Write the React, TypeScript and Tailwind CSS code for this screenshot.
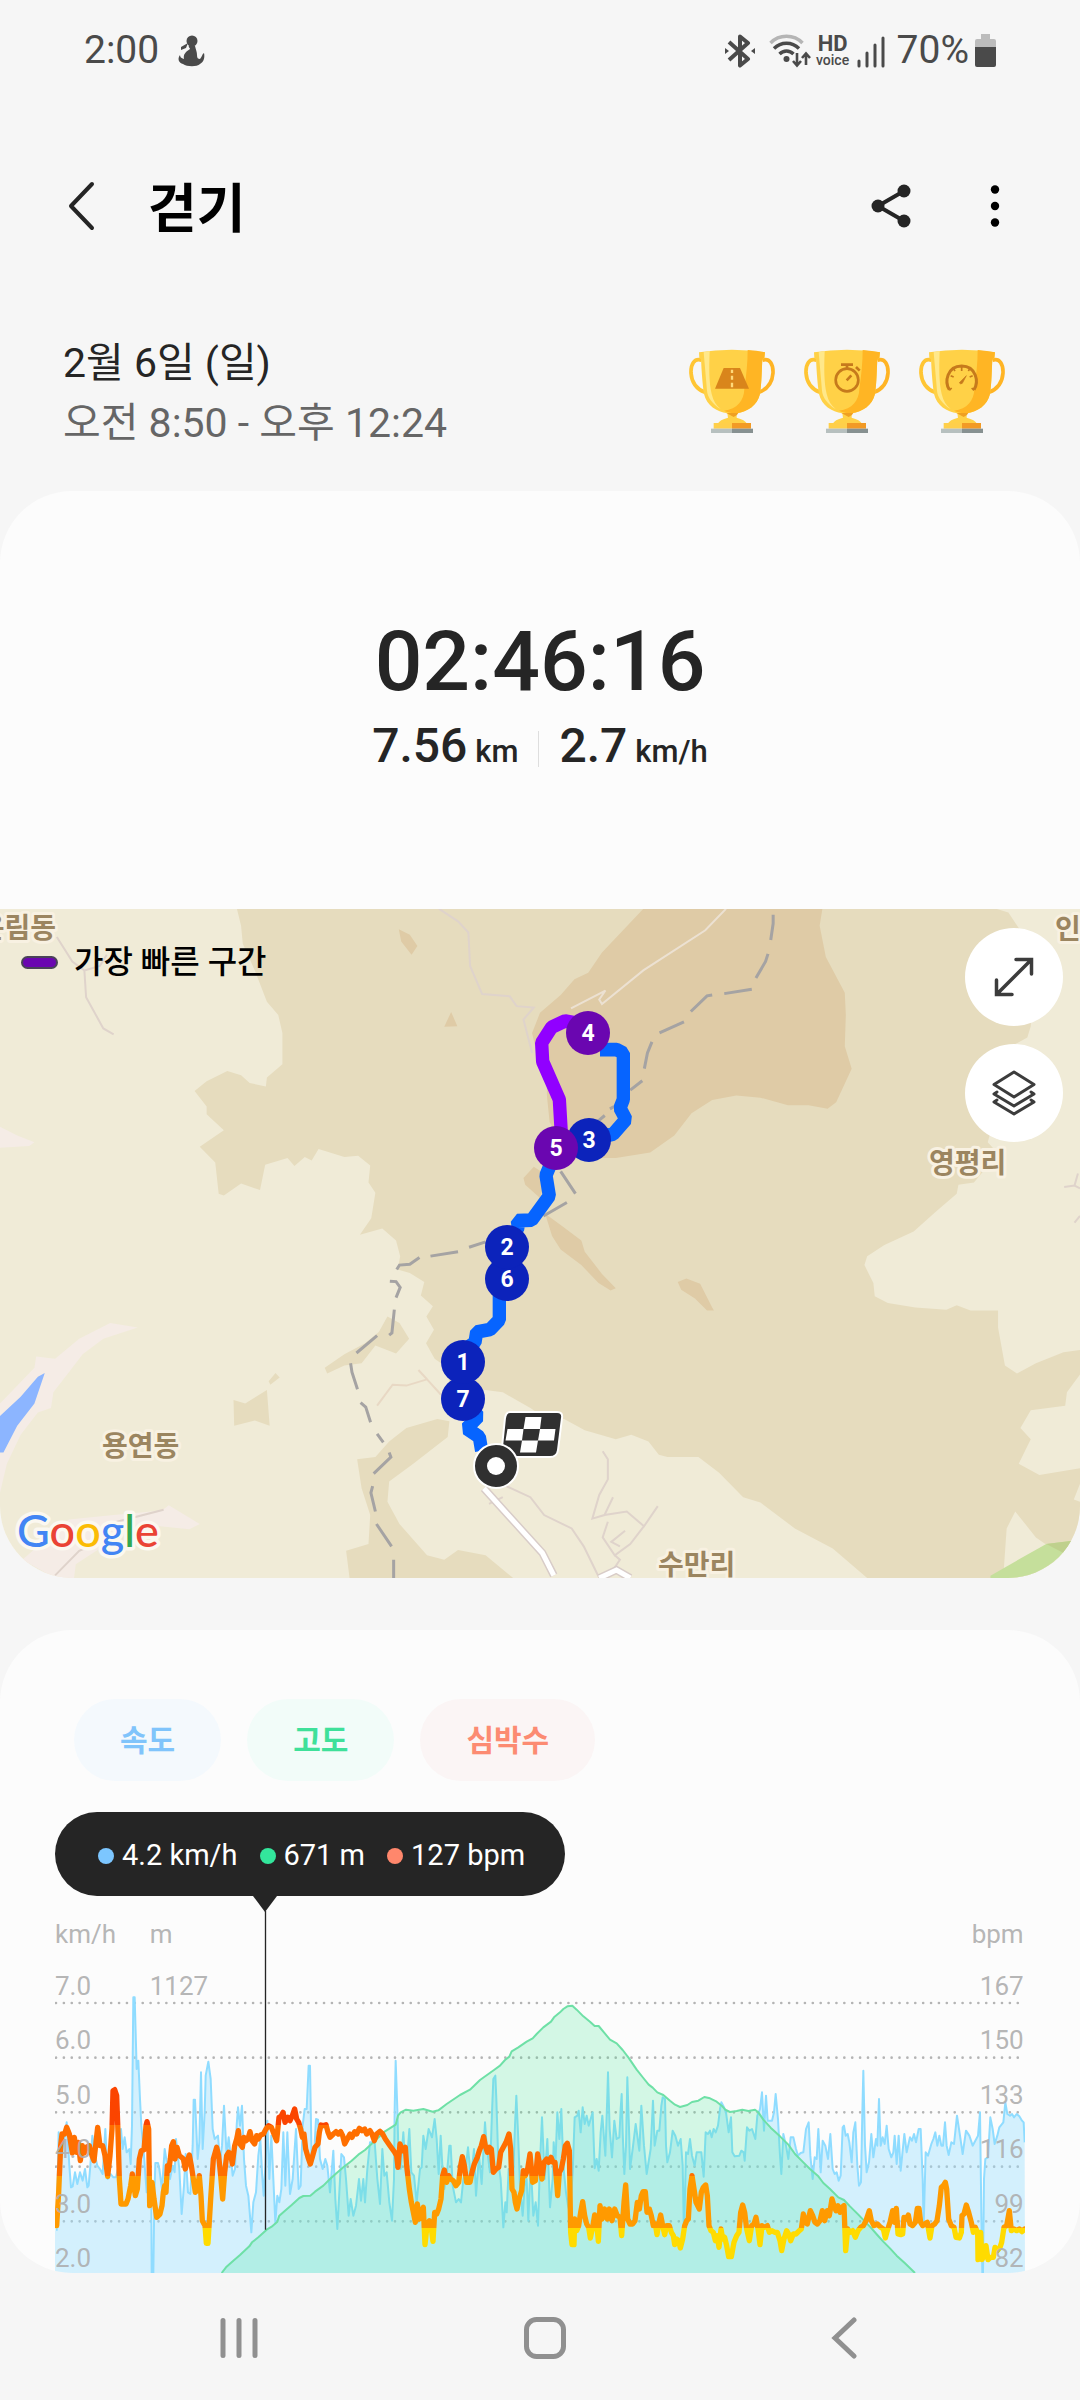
import React from 'react';

type Point = [number, number];

const toPoints = (dx: number, raw: string): Point[] =>
  raw
    .trim()
    .split(/\s+/)
    .map((pair) => {
      const [x, y] = pair.split(',').map(Number);
      return [x + dx, y];
    });

const toPath = (points: Point[]) =>
  'M' + points.map(([x, y]) => `${x} ${y}`).join('L');

// Chart space is 2910 units wide, each series comes in three chunks
const speed: Point[] = [
  ...toPoints(
    -45,
    `50,1055 56,760 62,850 80,730 88,860 93,925 98,922 105,880 112,915 120,880 128,905 135,870 142,925 146,920 151,860 157,770 165,830 172,860 180,870 188,885 196,750
    203,900 212,885 220,895 228,895 236,860 243,750 248,810 254,775 260,820 268,810 272,855 276,740 280,355 284,355 290,570 295,545 300,660 304,740 312,830
    320,940 328,820 334,960 335,1182 340,1182 343,960 346,852 354,852 358,870 366,930 374,810 382,860 390,900 398,860 404,880 408,780 418,870 425,1005 432,920 437,825
    444,940 451,945 458,800 461,662 465,662 473,840 478,790 483,580 488,810 494,700 497,590 505,548 512,600 518,750 524,780 534,770 540,850 546,800 552,680 560,830
    566,775 572,830 578,890 585,870 590,740 594,685 600,740 606,680 612,840 618,920 625,950 634,1060 640,970 648,940 655,830 661,780 666,880 671,950 677,850
    682,725 688,900 694,770 700,900 706,1030 712,950 718,970 724,930 730,760 736,920 742,760 750,945 758,900 768,750 776,930 782,920 788,740 794,690 800,690
    806,560 810,560 815,850 822,830 828,720 834,722 840,840 848,870 856,840 862,860 870,940 880,815 886,960 892,1050 898,940 904,825 912,835 918,900 926,1010
    932,960 940,1010 948,980 957,900 963,965 970,900 975,970 982,870 990,790`,
  ),
  ...toPoints(
    945,
    `8,790 14,790 22,900 30,975 37,810 43,890 50,880 58,970 66,1025 72,900 74,690 77,545 82,690 86,850 92,870 100,760 108,890 118,750 124,880 132,890 140,970
    150,870 155,865 160,770 167,810 176,750 186,775 194,720 200,780 206,885 212,770 217,860 223,930 232,870 238,800 242,800 248,920 258,970 266,960 273,970 280,900 287,870
    294,805 303,900 312,810 318,950 327,830 335,915 345,730 350,800 360,880 366,700 370,600 376,590 379,660 385,850 392,900 400,1045 406,970 410,1000 416,870
    424,920 430,880 435,740 439,650 444,760 450,920 458,1010 464,920 470,900 475,1025 482,850 490,1010 497,970 504,1040 510,850 516,715 524,900 532,780 540,985
    548,900 551,790 556,860 562,700 568,780 574,690 580,860 588,940 594,980 600,1000 608,880 614,715 622,710 626,695 632,760 638,685 644,735 650,710 656,740
    668,700 674,868 680,840 686,875 692,760 697,710 706,830 712,650 714,580 719,750 726,835 733,725 740,780 748,775 752,690 755,645 758,760 763,885 768,800
    772,595 778,780 780,870 788,810 797,735 808,815 814,680 822,800 830,885 842,810 849,665 854,800 862,755 868,755 874,680 878,655 885,660 888,800 892,850
    900,820 908,755 916,770 924,800 932,780 938,860 942,1070 948,820 954,825 960,780 966,830 974,860 980,820 990,820`,
  ),
  ...toPoints(
    1935,
    `4,820 11,893 17,760 24,765 30,755 35,775 41,750 47,760 54,740 60,690 64,670 72,685 78,700 86,760 93,715 97,820 104,832 118,830 124,815 131,820 134,845
    141,745 148,755 156,750 166,780 172,710 180,690 186,640 192,755 198,650 203,725 216,725 222,700 227,645 234,720 240,830 244,885 250,765 258,800 265,840
    272,775 280,775 288,810 294,830 302,822 310,820 318,750 326,730 331,830 338,900 344,835 350,840 355,750 362,880 368,785 376,800 384,840 391,765 398,870
    404,885 410,880 416,905 422,890 428,745 432,740 437,770 443,765 448,790 455,850 460,760 466,730 472,860 477,920 483,910 487,700 490,575 495,800 500,880
    507,850 514,765 520,835 528,780 532,800 537,660 542,800 548,775 554,795 560,740 566,810 574,835 580,820 584,770 590,855 596,770 602,875 613,765 620,820
    630,775 636,785 642,765 648,790 656,750 662,750 668,900 671,1040 677,820 684,830 694,795 700,780 706,760 712,800 718,770 724,800 729,800 735,730 740,800
    746,828 754,790 762,795 771,710 780,770 788,825 798,755 808,770 818,800 826,785 834,770 840,700 844,1000 847,1182 849,1182 852,900 856,840 864,835 871,715
    878,750 884,795 892,770 898,745 910,730 916,670 922,705 930,710 936,705 942,715 950,705 958,712 966,725 971,730 974,790`,
  ),
];

const elevation: Point[] = [
  ...toPoints(
    -45,
    `545,1182 558,1165 580,1145 600,1128 628,1102 636,1090 655,1075 680,1052 695,1043 712,1028 718,1010 735,995 755,978 778,957 790,951 811,950 825,938 850,920
    870,900 890,882 910,865 935,845 955,827 975,813 1000,790`,
  ),
  ...toPoints(
    945,
    `45,757 77,737 84,710 92,700 108,692 130,695 160,690 188,698 205,694 230,675 270,648 300,632 330,603 372,573 390,560 405,543 418,533 425,517 445,505 470,488
    488,478 500,465 520,445 543,428 552,415 570,400 580,390 592,382 607,380 620,392 640,412 660,428 674,441 686,441 700,458 720,482 740,493 758,513 775,535
    800,572 820,597 836,617 848,626 862,640 880,648 900,665 915,677 930,684 952,678 966,669 985,665 1003,654`,
  ),
  ...toPoints(
    1935,
    `30,658 50,668 65,680 76,692 90,699 110,696 127,692 145,696 165,692 175,700 190,722 212,746 240,772 265,797 285,825 310,850 330,870 355,892 370,912 390,930
    415,955 432,963 450,982 475,1007 495,1028 512,1045 532,1068 550,1088 570,1108 590,1130 615,1153 645,1182`,
  ),
];

const heartRate: Point[] = [
  ...toPoints(
    -45,
    `50,1040 56,940 62,800 66,765 74,765 80,745 88,765 97,822 103,775 110,820 115,790 121,845 127,800 133,822 138,805 148,800 156,830 162,845 168,790 173,745
    180,800 188,800 195,830 203,892 210,830 216,750 219,635 224,632 230,650 234,760 238,900 243,975 258,975 264,960 272,920 277,885 286,950 292,930 298,840 304,815
    312,812 318,740 321,728 326,750 329,980 336,910 342,960 350,1015 360,1005 366,980 370,940 374,920 378,940 382,860 386,875 391,840 395,800 400,788 405,840
    411,805 418,830 425,835 430,840 436,870 442,845 448,828 454,860 460,900 466,940 472,930 478,890 483,950 487,1025 495,1040 499,1093 504,1093 512,960 520,840
    530,805 536,830 542,890 548,960 554,880 560,830 566,820 572,825 577,855 584,800 590,780 595,755 600,795 607,805 612,775 618,785 624,780 630,758 636,785
    644,795 650,770 655,780 662,768 670,765 678,750 686,740 694,745 702,765 710,785 717,715 723,712 729,700 735,730 744,715 750,725 757,710 764,690 770,720
    776,730 782,750 787,775 792,765 797,810 804,835 811,855 818,830 825,805 834,795 838,760 843,738 850,740 858,737 864,760 870,775 880,765 888,758 895,765
    902,758 908,770 914,795 922,780 930,765 936,775 944,758 950,765 958,748 966,755 974,750 980,765`,
  ),
  ...toPoints(
    945,
    `0,755 6,765 13,785 20,765 30,757 38,765 46,780 60,800 74,820 80,830 84,865 90,795 98,815 106,805 110,860 118,930 124,970 130,1000 136,1030 142,975 148,1020
    154,1000 160,985 165,1097 171,1040 178,1025 184,1050 189,1087 194,1000 200,1005 206,990 213,960 218,890 223,873 230,910 236,890 242,900 250,905 258,920
    266,910 272,860 277,833 283,860 290,910 300,910 306,880 313,855 322,835 328,815 334,800 341,773 346,800 352,820 358,805 364,810 370,880 378,870 386,865
    392,820 400,805 408,790 417,765 422,810 426,930 432,940 436,970 441,990 447,960 455,935 460,875 466,890 473,870 480,825 488,910 496,905 503,825 510,860
    516,900 522,850 530,840 536,850 543,835 549,850 555,850 560,910 563,950 568,880 574,870 580,840 586,800 592,793 598,815 602,1060 606,1097 612,1097 614,1020
    620,1055 626,1040 632,1000 638,968 644,1010 650,1035 656,1045 661,1077 668,1045 674,1008 680,1030 685,1087 690,980 696,1020 704,990 712,1020 718,990
    726,1025 734,990 742,1010 750,1015 755,1070 762,970 767,918 773,1020 780,1035 788,1035 795,1025 802,970 808,990 814,950 819,938 826,938 831,1000 838,990
    844,1010 850,1040 856,1035 861,1067 866,1035 872,1008 878,1040 884,1067 890,1040 898,1040 904,1060 910,1070 914,1097 920,1080 926,1085 931,1107 938,1080
    944,1040 950,1025 955,1020 960,930 966,890 972,930 978,970 988,990`,
  ),
  ...toPoints(
    1935,
    `4,940 10,925 17,918 22,950 27,1040 33,1055 40,1060 46,1085 52,1070 57,1105 63,1050 68,1080 74,1075 80,1100 86,1133 94,1133 102,1090 110,1070 117,1060
    122,1000 128,978 134,1000 140,1050 148,1085 155,1040 162,1035 168,1015 174,1050 180,1097 186,1040 194,1045 202,1040 208,1060 216,1055 224,1060 232,1060
    240,1085 245,1115 252,1080 260,1055 266,1065 272,1085 280,1065 288,1065 298,1055 304,1050 310,1005 316,1030 322,1035 331,995 338,1010 345,1030 352,1035
    360,1025 367,995 374,1025 382,995 388,1010 396,960 402,980 408,995 414,980 420,1000 426,985 432,980 437,1115 443,1050 450,1060 458,1055 466,1075 474,1055
    482,1045 490,1040 498,1025 508,995 514,1025 522,1040 532,1035 542,1045 550,1050 556,1077 562,1055 570,1030 578,995 584,1030 589,988 594,1065 602,1067
    608,1065 612,1015 618,1020 625,1008 630,1035 638,1040 646,1030 652,988 657,988 662,1030 668,1040 674,1035 682,1030 690,1077 696,1040 704,1035 711,1025
    718,980 724,925 730,920 736,910 740,930 746,1020 754,1040 762,1045 768,1075 778,1077 784,1060 786,1010 792,1005 799,978 806,1000 814,1030 820,1060
    826,1045 833,1060 834,1142 842,1060 846,1142 852,1130 858,1100 864,1142 872,1135 880,1135 885,1105 892,1115 900,1105 905,1090 912,1045 920,1040 928,995
    934,1055 942,1050 950,1055 958,1050 966,1058 974,1050`,
  ),
];

const ticks = [
  { y: 372, speed: '7.0', bpm: '167' },
  { y: 536, speed: '6.0', bpm: '150' },
  { y: 700, speed: '5.0', bpm: '133' },
  { y: 863, speed: '4.0', bpm: '116' },
  { y: 1027, speed: '3.0', bpm: '99' },
  { y: 1190, speed: '2.0', bpm: '82' },
];

const markers = [
  { label: '7', x: 463, y: 490, color: '#0c23bb' },
  { label: '1', x: 463, y: 453, color: '#0c23bb' },
  { label: '6', x: 507, y: 370, color: '#0c23bb' },
  { label: '2', x: 507, y: 338, color: '#0c23bb' },
  { label: '3', x: 589, y: 231, color: '#0c23bb' },
  { label: '5', x: 556, y: 239, color: '#6a06b0' },
  { label: '4', x: 588, y: 124, color: '#6a06b0' },
];

const places = [
  { name: '운림동', x: 56, y: 29, anchor: 'end' as const },
  { name: '인', x: 1055, y: 30, anchor: 'start' as const },
  { name: '영평리', x: 929, y: 264, anchor: 'start' as const },
  { name: '용연동', x: 102, y: 547, anchor: 'start' as const },
  { name: '수만리', x: 658, y: 666, anchor: 'start' as const },
];

const StatusBar: React.FC = () => (
  <div className="flex h-[98px] items-center justify-between px-[84px] pt-[3px] text-[39px] leading-none text-[#4a4a4a]">
    <div className="flex items-center gap-[18px]">
      <span>2:00</span>
      <svg width="28" height="32" viewBox="0 0 28 32" fill="#4a4a4a">
        <circle cx="15" cy="6" r="5.5" />
        <path d="M12 10C11 12 13 13 13 14C8 17 6 20 7 24C4 23 3 22 3 20C0 24 2 28 6 29C10 32 20 32 23 29C27 27 28 22 27 18C25 19 25 22 23 24C21 24 20 23 20 20C20 17 19 15 18 11Z" />
        <path d="M11 8L4 12L4 15L9 13Z" />
      </svg>
    </div>
    <div className="flex items-center">
      <svg width="30" height="34" viewBox="0 0 30 34" fill="none" stroke="#4a4a4a" strokeWidth="4">
        <path d="M4 8L23 25L15 31.500V2.500L23 9L4 26" strokeLinejoin="round" />
        <path d="M0 14L4 17L0 20ZM30 14L26 17L30 20Z" fill="#4a4a4a" stroke="none" />
      </svg>
      <svg className="ml-3.5" width="42" height="34" viewBox="0 0 42 34" fill="none" strokeWidth="3.4">
        <path d="M1.500 9C10 0 25 0 33.500 9" stroke="#b5b5b5" />
        <path d="M5 14.500C12 7.500 23 7.500 30 14.500M10.500 20C14.500 16 20.500 16 24.500 20" stroke="#4a4a4a" />
        <circle cx="17.500" cy="25" r="3" fill="#4a4a4a" />
        <path d="M28 19V31M24 27L28 31.500L32 27M37 31V20M33 24L37 19.500L41 24" stroke="#4a4a4a" strokeWidth="2.600" />
      </svg>
      <div className="ml-1 flex w-9 flex-col items-center">
        <span className="text-[22px] font-bold leading-[18px]">HD</span>
        <span className="text-[14px] font-medium leading-[14px]">voice</span>
      </div>
      <svg className="ml-1.5" width="28" height="34" viewBox="0 0 28 34" stroke="#4a4a4a" strokeWidth="3" strokeLinecap="round">
        <path d="M2 27V32M10 19V32M18 11V32M26 4V32" />
      </svg>
      <span className="ml-3">70%</span>
      <svg className="ml-1.5" width="21" height="34" viewBox="0 0 21 34">
        <path d="M6 0H15V5H19Q21 5 21 7V14H0V7Q0 5 2 5H6Z" fill="#bcbcbc" />
        <path d="M0 13H21V31Q21 33 19 33H2Q0 33 0 31Z" fill="#4a4a4a" />
      </svg>
    </div>
  </div>
);

const Trophy: React.FC<{ children: React.ReactNode }> = ({ children }) => (
  <svg width="86" height="84" viewBox="0 0 258 252">
    <g fill="none" stroke="#ffc533" strokeWidth="11">
      <path d="M38 34C16 26 5 46 6 72C8 100 22 120 48 130" />
      <path d="M220 34C242 26 253 46 252 72C250 100 236 120 210 130" stroke="#ffb424" />
    </g>
    <path d="M30 10Q129 -6 228 10L226 28L220 30C218 70 218 100 213 135C205 170 175 188 143 193L143 206Q168 212 174 224H86Q92 212 117 206L115 193C83 188 53 170 45 135C40 100 38 70 36 30L31 28Z" fill="#ffd147" />
    <path d="M176 3Q205 5 228 10L226 28L220 30C218 70 218 100 213 135C205 170 175 188 143 193Q118 192 105 185C145 180 165 155 166 120C172 80 176 40 176 3Z" fill="#ffb524" />
    <path d="M44 10L62 6C60 60 60 100 68 135Q75 165 95 180C70 165 56 145 54 125Z" fill="#ffe88a" />
    <path d="M112 192H148Q145 200 134 204Z" fill="#f0a022" />
    <path d="M74 222H129V239H74Z" fill="#ffcf4a" />
    <path d="M129 222H186V239H129Z" fill="#f29a25" />
    <path d="M66 239H129V252H66Z" fill="#b7c0bf" />
    <path d="M129 239H192V252H129Z" fill="#879191" />
    {children}
  </svg>
);

const Trophies: React.FC = () => (
  <div className="flex gap-[29px] pb-1">
    <Trophy>
      <path d="M104 57H153L180 119H78Z" fill="#d9851b" />
      <path d="M129 62V72M129 80V92M129 101V115" stroke="#ffd97a" strokeWidth="7" />
    </Trophy>
    <Trophy>
      <g fill="none" stroke="#c67a1c" strokeWidth="8">
        <circle cx="129" cy="93" r="34" />
        <path d="M111 47H147M129 47V58M156 54L167 65M128 94L142 79" />
      </g>
    </Trophy>
    <Trophy>
      <g fill="none" stroke="#c67a1c" strokeWidth="9">
        <path d="M91 122C76 98 84 52 128 51C172 52 180 98 165 122" />
        <path d="M91 124L98 117M165 124L158 117M128 54V66M95 80L104 84M161 80L152 84M103 58L108 66M153 58L148 66" strokeWidth="5" />
        <path d="M142 80L121 101Q124 107 130 103Z" fill="#c67a1c" strokeWidth="2" />
      </g>
    </Trophy>
  </div>
);

const RouteMap: React.FC = () => (
  <svg className="block w-full" viewBox="0 0 1080 669">
    <rect width="1080" height="669" fill="#f0ebd7" />
    <g transform="translate(0 -10) scale(0.34439 0.44643)">
      <g fill="#e6dcbe">
        <path d="M688 22L700 60L705 100L740 160L775 230L808 260L820 300V370L775 400L772 420L725 412L700 395L660 385L600 408L565 430L600 465V482L650 518L580 555L625 590L635 660L650 664L700 637L755 652L770 595L835 580L855 598L885 578L905 586L925 560L1000 578L1040 575L1075 597L1070 635L1090 658L1078 715L1045 752L1110 738L1150 765L1162 800L1155 830L1190 838L1232 858L1222 888L1257 912L1238 935L1260 965L1237 995L1262 1030L1290 1045L1310 1095L1410 1100L1460 1105L1540 1140L1572 1157V22Z" />
        <path d="M1037 1255L1090 1250L1130 1215L1180 1185L1270 1165L1305 1170L1300 1205L1200 1265L1130 1305L1125 1350L1160 1400L1240 1470L1290 1480L1330 1458L1410 1470L1490 1521H1015L1005 1460L1070 1445L1075 1380L1050 1320Z" />
        <path d="M943 1050L1000 1020L1060 995L1100 970L1125 935L1160 950L1188 985L1150 1018L1090 1000L1050 1040L1000 1045L950 1063Z" />
        <path d="M678 1122L712 1130L775 1100L783 1180L740 1168L680 1180ZM780 1080L800 1062L812 1072L785 1088Z" />
      </g>
      <g fill="#f5ece6">
        <path d="M0 510L50 530L100 545L85 553L0 557Z" />
        <path d="M0 1130L100 1050L105 1025L160 1030L230 985L320 950L400 960L300 985L240 1020L200 1060L155 1105L148 1140L110 1150L60 1200L20 1265L0 1330Z" />
        <path d="M65 1480L200 1390L330 1380L470 1370L490 1358L580 1400L550 1412L400 1400L300 1450L220 1490L215 1521H160Z" />
      </g>
      <path d="M0 1158L60 1115L110 1070L130 1062L100 1130L50 1180L10 1240H0Z" fill="#8cb5ff" />
      <g transform="translate(1568 0)">
        <path d="M0 22H1568V1521H950L850 1455L740 1410L640 1352L590 1340L520 1285L460 1250L370 1250L345 1245L315 1215L265 1200L220 1210L130 1190L70 1165L0 1155Z" fill="#e6dcbe" />
        <g fill="#f0ebd7">
          <path d="M1325 22L1360 30L1390 65L1430 200L1425 285L1415 310L1380 325L1300 545L1330 570L1260 635L1215 640L1210 660L1150 700L1085 745L1000 775L950 800L942 820L968 860L972 890L1010 905L1090 915L1180 920L1210 910L1250 922H1330V960L1350 1045L1385 1063L1440 1040L1520 1015L1568 1010V22Z" />
          <path d="M1568 1065L1530 1105L1525 1135L1425 1145L1395 1185L1425 1210L1390 1265L1450 1290L1568 1275ZM1568 1310L1550 1345L1568 1350Z" />
          <path d="M1345 1521L1355 1410L1380 1372L1440 1430L1500 1462L1568 1475V1521Z" />
        </g>
        <path d="M1308 1516L1400 1475L1470 1445L1540 1438L1568 1436V1521H1308Z" fill="#c5df9b" />
        <path d="M1470 1445L1540 1438H1568V1470L1520 1465Z" fill="#bfd08d" />
      </g>
      <g fill="#dfcba6">
        <path d="M1158 68L1190 80L1212 105L1195 125L1165 95ZM1310 253L1328 285L1290 286ZM1520 625L1550 600L1590 620L1568 670L1525 640Z" />
        <path d="M1868 22L1748 120L1708 165L1668 180L1628 215L1568 255L1545 300L1560 350L1588 400V440L1596 500L1628 540L1698 580H1788L1888 568L1958 530L2008 480L2068 450L2138 440L2208 445L2288 462H2348L2403 470L2428 455L2473 380L2453 330L2456 260L2453 210L2398 130L2380 60L2388 22Z" />
        <path d="M1583 705L1628 730L1688 765L1698 790L1748 840L1788 872L1773 877L1738 860L1688 820L1628 785L1603 755Z" />
        <path d="M1968 858L1993 850L2033 862L2068 915L2073 922H2053L2018 895L1978 875Z" />
      </g>
      <g fill="none" stroke="#dfd3cb" strokeWidth="2">
        <path vectorEffect="non-scaling-stroke" d="M1275 22L1330 50L1360 75L1365 150L1400 213L1480 218L1500 240L1550 243L1520 270L1545 345M165 85L210 140L245 160L250 220L300 290L330 303M310 125L290 150L245 160" />
        <path vectorEffect="non-scaling-stroke" d="M160 1515L230 1460L260 1450L340 1395L475 1368" />
        <path vectorEffect="non-scaling-stroke" d="M1095 1135L1140 1088L1180 1090L1240 1076L1215 1055M1240 1076L1280 1110" stroke="#e8d8c4" />
        <path vectorEffect="non-scaling-stroke" d="M1420 1355L1460 1340M1470 1315L1540 1340L1580 1380L1660 1410L1695 1450L1740 1521" />
        <path vectorEffect="non-scaling-stroke" d="M1750 1237L1765 1255V1300L1740 1335L1720 1388L1755 1380L1780 1340M1755 1380L1820 1372L1870 1405L1910 1360M1870 1405L1830 1445L1785 1470L1750 1430L1765 1395M1800 1450L1775 1440L1815 1415M1785 1470L1800 1480L1770 1515" />
        <path vectorEffect="non-scaling-stroke" d="M3090 645L3120 642L3136 648M3120 642L3130 615M3120 725L3136 710" />
        <path vectorEffect="non-scaling-stroke" d="M2108 22L2048 70L1868 160L1748 235L1740 225L1758 205L1658 245" stroke="#ece1d2" />
      </g>
      <g fill="none">
        <path vectorEffect="non-scaling-stroke" d="M1405 1320L1575 1465L1608 1515M1740 1521L1790 1503L1830 1521" stroke="#d8ccc8" strokeWidth="8" />
        <path vectorEffect="non-scaling-stroke" d="M1405 1320L1575 1465L1608 1515M1740 1521L1790 1503L1830 1521" stroke="#ffffff" strokeWidth="5" />
      </g>
      <path
        vectorEffect="non-scaling-stroke"
        fill="none"
        stroke="#a5a3a3"
        strokeWidth="3"
        d="M1410 768L1362 780M1330 790L1250 800M1218 803L1190 818L1160 820L1152 830M1132 856L1150 857L1162 870L1150 893M1145 920L1138 972L1130 977M1095 978L1035 1017M1018 1040L1022 1060L1038 1098M1047 1128L1062 1138L1076 1172M1095 1198L1113 1217M1130 1240L1135 1250L1085 1287M1082 1315L1077 1330L1090 1372M1093 1400L1137 1450M1143 1480V1521
        M2245 35V55L2238 92M2230 123L2223 140L2195 177M2183 202L2103 212M2068 215L2053 217L2006 252M1986 275L1915 300M1893 320L1880 345L1871 380M1865 407L1830 428M1783 465L1771 470M1756 485L1733 500M1628 610L1671 660M1646 680L1578 710"
      />
    </g>

    {places.map((place) => (
      <text
        key={place.name}
        x={place.x}
        y={place.y}
        textAnchor={place.anchor}
        className="font-['Noto_Sans_CJK_KR',sans-serif] text-[28px] font-bold"
        fill="#9b8560"
        stroke="#f8f1e2"
        strokeWidth="6"
        strokeLinejoin="round"
        paintOrder="stroke"
      >
        {place.name}
      </text>
    ))}

    <text
      x="17"
      y="638"
      className="font-[Lato,sans-serif] text-[45px] font-medium"
      stroke="#fbf8f0"
      strokeWidth="7"
      strokeLinejoin="round"
      paintOrder="stroke"
    >
      <tspan fill="#4285f4">G</tspan>
      <tspan fill="#ea4335">o</tspan>
      <tspan fill="#fbbc05">o</tspan>
      <tspan fill="#4285f4">g</tspan>
      <tspan fill="#34a853">l</tspan>
      <tspan fill="#ea4335">e</tspan>
    </text>

    <g transform="translate(400 70) scale(0.33333 0.34435)" fill="none" strokeWidth="40" strokeLinejoin="bevel">
      <path d="M245 1370L238 1330L200 1305L235 1270L189 1220L189 1080L225 1055L230 1025L270 1018L298 990V900L321 778L355 720L352 702L395 700L448 630L438 570L455 530" stroke="#0664ff" />
      <path d="M568 467L640 450L678 408L660 375L670 350V215L650 205H600" stroke="#0664ff" />
      <path d="M484 450L478 350L428 240L425 185L455 140L495 122L540 130" stroke="#9100ff" />
    </g>

    <path d="M510 503H557Q563 503 562 509L558 541Q557 548 550 548H501L505 509Q506 503 510 503Z" fill="#303030" stroke="#fff" strokeWidth="2" />
    <path d="M525.500 508H541.500L540 520H555.500L554 531.500H538L536 543.500H520L522 531.500H505.500L507.500 520H523.500Z" fill="#fff" />
    <path d="M523.500 520H540L538 531.500H522Z" fill="#303030" />
    <circle cx="496" cy="557" r="22" fill="#303030" stroke="#fff" strokeWidth="2" />
    <circle cx="496" cy="557" r="9" fill="#fff" />

    {markers.map((marker) => (
      <g key={marker.label}>
        <circle cx={marker.x} cy={marker.y} r="22" fill={marker.color} />
        <text x={marker.x} y={marker.y + 8} textAnchor="middle" fill="#fff" className="text-[23px] font-bold">
          {marker.label}
        </text>
      </g>
    ))}
  </svg>
);

const WorkoutChart: React.FC = () => {
  const first = speed[0];
  const speedArea = `${toPath(speed)}L2910 1182L0 1182L0 ${first[1]}Z`;
  const elevationArea = `${toPath(elevation)}Z`;

  return (
    <svg className="block w-full" viewBox="0 96 2910 1086">
      <defs>
        <linearGradient id="zones" gradientUnits="userSpaceOnUse" x1="0" y1="600" x2="0" y2="1200">
          <stop offset="0.23" stopColor="#fb4400" />
          <stop offset="0.23" stopColor="#ff6f00" />
          <stop offset="0.483" stopColor="#ff6f00" />
          <stop offset="0.483" stopColor="#ff9a00" />
          <stop offset="0.745" stopColor="#ff9a00" />
          <stop offset="0.745" stopColor="#ffdb00" />
        </linearGradient>
      </defs>
      {ticks.slice(0, 5).map((tick) => (
        <path
          key={tick.y}
          d={`M3 ${tick.y}H2910`}
          stroke="#b4b4b4"
          strokeWidth="8"
          strokeDasharray="0 23.650"
          strokeLinecap="round"
        />
      ))}
      <path d={speedArea} fill="#96deff" fillOpacity="0.4" />
      <path d={toPath(speed)} fill="none" stroke="#8fdcff" strokeWidth="6" strokeLinejoin="round" />
      <path d={elevationArea} fill="#33e78c" fillOpacity="0.2" />
      <path d={toPath(elevation)} fill="none" stroke="#6ee0a6" strokeWidth="6" strokeLinejoin="round" />
      <path d="M631.500 96V1052" stroke="#252525" strokeWidth="4" />
      <path
        d={toPath(heartRate)}
        fill="none"
        stroke="url(#zones)"
        strokeWidth="16"
        strokeLinejoin="round"
        strokeLinecap="round"
      />
      <g fill="#adadad" fillOpacity="0.9" className="text-[78px]">
        <text x="0" y="192">km/h</text>
        <text x="284" y="192">m</text>
        <text x="2906" y="192" textAnchor="end">bpm</text>
        <text x="284" y="348">1127</text>
        {ticks.map((tick) => (
          <React.Fragment key={tick.y}>
            <text x="0" y={tick.y - 25}>{tick.speed}</text>
            <text x="2906" y={tick.y - 25} textAnchor="end">{tick.bpm}</text>
          </React.Fragment>
        ))}
      </g>
    </svg>
  );
};

export default function App() {
  return (
    <main className="min-h-screen bg-[#f6f6f6] font-[Roboto,'Noto_Sans_CJK_KR',sans-serif] text-[#252525]">
      <StatusBar />

      <header className="flex h-[216px] items-center pl-[67px] pr-[80px]">
        <button type="button" aria-label="뒤로">
          <svg width="28" height="50" viewBox="0 0 28 50" fill="none" stroke="#252525" strokeWidth="4" strokeLinecap="round" strokeLinejoin="round">
            <path d="M25 3L4 25L25 47" />
          </svg>
        </button>
        <h1 className="ml-[53px] grow pt-2 text-[53px] font-bold leading-[60px] text-black">걷기</h1>
        <button type="button" aria-label="공유">
          <svg width="40" height="44" viewBox="0 0 40 44" fill="#252525">
            <path d="M33 7L7 22L33 37" fill="none" stroke="#252525" strokeWidth="4" />
            <circle cx="33" cy="7" r="6.500" />
            <circle cx="7" cy="22" r="6.500" />
            <circle cx="33" cy="37" r="6.500" />
          </svg>
        </button>
        <button type="button" aria-label="더보기" className="ml-[79px]">
          <svg width="10" height="44" viewBox="0 0 10 44" fill="#000">
            <circle cx="5" cy="5.500" r="4.200" />
            <circle cx="5" cy="22" r="4.200" />
            <circle cx="5" cy="38.500" r="4.200" />
          </svg>
        </button>
      </header>

      <section className="flex items-center justify-between pb-[38px] pl-[63px] pr-[75px] pt-[19px] text-[41px] leading-[60px]">
        <div>
          <p>2월 6일 (일)</p>
          <p className="text-[#666]">오전 8:50 - 오후 12:24</p>
        </div>
        <Trophies />
      </section>

      <section className="overflow-hidden rounded-[72px] bg-[#fcfcfc]">
        <div className="flex flex-col items-center pb-[127px] pt-[129px] font-medium">
          <p className="text-[84px] leading-[84px]">02:46:16</p>
          <div className="mt-3 flex items-center">
            <p className="text-[48px] leading-[60px]">
              7.56 <span className="-ml-1 text-[31px]">km</span>
            </p>
            <span className="mx-5 h-9 w-px bg-[#dedede]" />
            <p className="text-[48px] leading-[60px]">
              2.7 <span className="-ml-1 text-[31px]">km/h</span>
            </p>
          </div>
        </div>

        <div className="relative">
          <RouteMap />
          <div className="absolute left-[21px] top-[30px] flex items-center gap-4 text-[32px] font-medium leading-[46px] text-black">
            <span className="h-[13px] w-[37px] rounded-full border-2 border-[#4a4358] bg-[#6a06b0]" />
            가장 빠른 구간
          </div>
          <div className="absolute right-[17px] top-[19px] flex flex-col gap-[18px]">
            <button type="button" aria-label="지도 확대" className="flex size-[98px] items-center justify-center rounded-full bg-white">
              <svg width="40" height="40" viewBox="0 0 40 40" fill="none" stroke="#3c3c3c" strokeWidth="3.500" strokeLinecap="round">
                <path d="M3 37L37 3M22 2.500H37.500V17M2.500 23V37.500H18" />
              </svg>
            </button>
            <button type="button" aria-label="지도 유형" className="flex size-[98px] items-center justify-center rounded-full bg-white">
              <svg width="44" height="46" viewBox="0 0 44 46" fill="none" stroke="#3c3c3c" strokeWidth="3" strokeLinejoin="round" strokeLinecap="round">
                <path d="M22 2L42 14.500L22 27L2 14.500Z" />
                <path d="M5 22L2 24L22 36L42 24L39 22M5 30L2 32L22 44L42 32L39 30" />
              </svg>
            </button>
          </div>
        </div>
      </section>

      <section className="mt-[52px] overflow-hidden rounded-[72px] bg-[#fcfcfc] px-[55px] pt-[69px]">
        <div className="flex gap-[26px] pl-[19px] text-[30px] font-bold">
          <button type="button" className="h-[82px] rounded-full bg-[#f4f9fd] px-[46px] text-[#80c4fb]">속도</button>
          <button type="button" className="h-[82px] rounded-full bg-[#f2fcf9] px-[46px] text-[#3fe09a]">고도</button>
          <button type="button" className="h-[82px] rounded-full bg-[#fbf5f5] px-[46px] text-[#fc8b72]">심박수</button>
        </div>

        <div className="relative mb-[15px] mt-[31px] flex h-[84px] w-fit items-center gap-[22px] rounded-full bg-[#252525] pl-[43px] pr-10 pt-1 text-[29px] text-white">
          <span className="flex items-center gap-2">
            <i className="size-4 rounded-full bg-[#7cc6ff]" />
            4.2 km/h
          </span>
          <span className="flex items-center gap-2">
            <i className="size-4 rounded-full bg-[#33e69c]" />
            671 m
          </span>
          <span className="flex items-center gap-2">
            <i className="size-4 rounded-full bg-[#ff876c]" />
            127 bpm
          </span>
          <svg className="absolute left-[198px] top-full" width="24" height="16" viewBox="0 0 24 16" fill="#252525">
            <path d="M0 0H24L12 16Z" />
          </svg>
        </div>

        <WorkoutChart />
      </section>

      <nav className="flex h-[126px] items-center justify-between pl-[219px] pr-[217px] pt-1">
        <button type="button" aria-label="최근 앱">
          <svg width="40" height="42" viewBox="0 0 40 42" stroke="#909090" strokeWidth="5" strokeLinecap="round">
            <path d="M4 3.500V38.500M20 3.500V38.500M36 3.500V38.500" />
          </svg>
        </button>
        <button type="button" aria-label="홈">
          <svg width="44" height="44" viewBox="0 0 44 44" fill="none" stroke="#909090" strokeWidth="5">
            <rect x="3.500" y="3.500" width="37" height="37" rx="10" />
          </svg>
        </button>
        <button type="button" aria-label="뒤로 가기">
          <svg width="32" height="42" viewBox="0 0 32 42" fill="none" stroke="#909090" strokeWidth="5" strokeLinecap="round">
            <path d="M23 3L4 21L23 39" />
          </svg>
        </button>
      </nav>
    </main>
  );
}
